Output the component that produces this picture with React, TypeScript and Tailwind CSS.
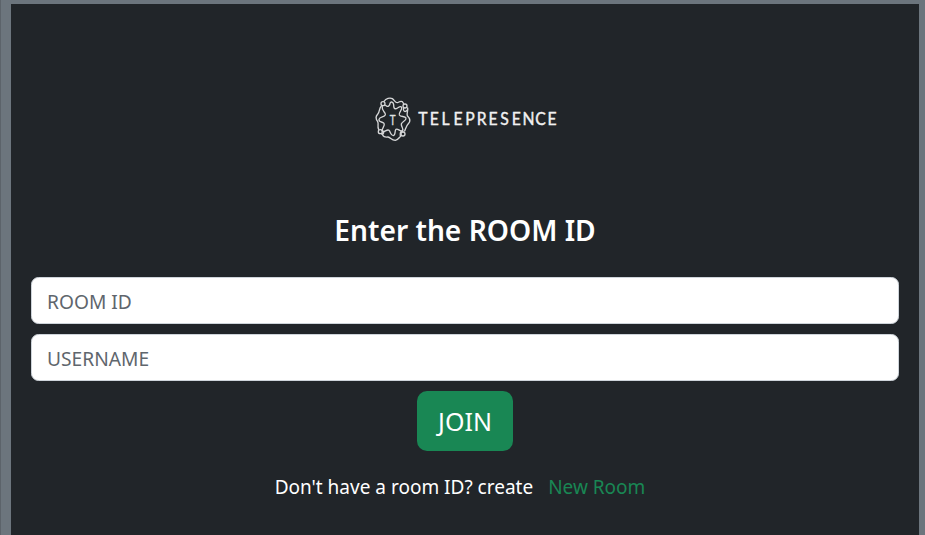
import React from "react";

const sans = "font-['Noto_Sans','Open_Sans',sans-serif]";

function Emblem() {
  return (
    <svg className="h-14 w-[45px] shrink-0" viewBox="0 0 135 168" fill="none" stroke="#d6d7d8" strokeWidth="4" strokeLinecap="round" strokeLinejoin="round">
      <path d="M42 34C48 25 60 22 67 26C74 31 76 39 82 38C88 36 91 32 97 35C101 38 101 41 101 43M113 54C115 63 109 69 112 77C120 85 121 94 116 100C109 107 108 113 104 123M93 138C88 141 86 149 76 151C64 151 62 142 54 141C45 142 38 141 37 131M26 118C21 109 27 103 23 95C17 87 17 79 23 73C30 66 26 56 34 48" />
      <path d="M47 46C53 53 60 47 60 40C63 33 70 36 71 44C71 52 72 58 79 56C86 53 91 46 95 52C98 60 85 67 88 75C92 82 105 77 108 84C110 92 96 94 94 102C93 111 103 117 97 122C89 126 84 114 78 118C73 122 78 135 70 137C62 137 62 126 57 121C51 116 42 129 37 124C33 116 47 108 42 100C37 94 26 98 27 88C30 78 43 83 46 74C47 66 34 63 37 50" />
      <path d="M101 54C98 63 105 69 112 60M99 124C91 121 90 130 91 138M37 121C44 125 41 134 35 132" />
      <circle cx="39" cy="41" r="6" />
      <circle cx="105" cy="48" r="6" />
      <circle cx="99" cy="132" r="6" />
      <circle cx="31" cy="125" r="6" />
      <text transform="translate(68 104) scale(0.78 1)" textAnchor="middle" className="font-['Lato',sans-serif] text-[38px]" fill="#dfe0e1" stroke="#dfe0e1" strokeWidth="1">T</text>
    </svg>
  );
}

function Logo() {
  return (
    <div className="mt-[86px] ml-[339px] flex h-14 w-[200px] self-start">
      <Emblem />
      <svg className="h-14 w-[155px] shrink-0 overflow-visible" viewBox="415 90 155 56">
        <text
          transform="translate(419 0) scale(0.9 1)"
          x="-0.8 12 25 38.3 51.3 64.3 77.3 90.4 103 115 129.1 142.9"
          y="125"
          className="font-['Lato',sans-serif] text-[17.5px]"
          fill="#f1f1f1"
          stroke="#f1f1f1"
          strokeWidth="0.4"
          strokeLinejoin="round"
        >
          TELEPRESENCE
        </text>
      </svg>
    </div>
  );
}

const field =
  "h-[47px] w-full rounded-[7.5px] border border-[#ced4da] bg-white px-[15px] pt-[2px] text-[19.2px] text-[#212529] placeholder:text-[#5f666d] placeholder:opacity-100 outline-none";

export default function App() {
  return (
    <div className={`${sans} flex h-[535px] w-[925px] overflow-hidden border-l border-[#5c636a] bg-[#6c757d] pl-[10px] pr-[6px] pt-1 text-white`}>
      <main className="flex flex-1 flex-col items-center bg-[#212529] px-5">
        <Logo />
        <h1 className="mt-[66px] h-[36px] whitespace-nowrap text-[28.2px] font-semibold leading-[36px]">Enter the ROOM ID</h1>
        <form className="mt-[29px] flex w-full flex-col items-center gap-[10px]" onSubmit={(e) => e.preventDefault()}>
          <input className={field} placeholder="ROOM ID" />
          <input className={field} placeholder="USERNAME" />
          <button className="h-[60px] w-24 rounded-[10px] bg-[#198754] pt-[2px] text-[25px]">JOIN</button>
        </form>
        <p className="mt-[21px] flex gap-[15px] whitespace-nowrap pr-[10px] text-[19px] leading-[30px]">
          <span>Don't have a room ID? create</span>
          <a className="text-[#198754]">New Room</a>
        </p>
      </main>
    </div>
  );
}
